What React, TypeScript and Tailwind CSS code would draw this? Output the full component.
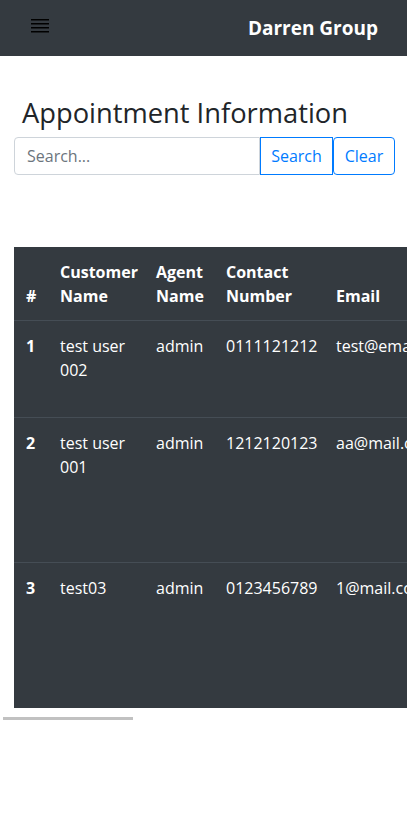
import React from "react";

const rows = [
  { id: 1, name: "test user 002", agent: "admin", phone: "0111121212", email: "test@email.com", h: "h-[97px] border-b" },
  { id: 2, name: "test user 001", agent: "admin", phone: "1212120123", email: "aa@mail.com", h: "h-[145px] border-b" },
  { id: 3, name: "test03", agent: "admin", phone: "0123456789", email: "1@mail.com", h: "h-[145px]" },
];

export default function App() {
  return (
    <div className="w-[407px] h-[816px] overflow-hidden bg-white font-['Open_Sans',sans-serif] text-[#212529]">
      {/* Navbar */}
      <div className="flex h-14 items-center justify-between bg-[#343a40] pl-[31px] pr-[29px]">
        <svg width="18" height="14" viewBox="0 0 18 14" className="mb-[4px]">
          <rect x="0" y="0" width="18" height="1.5" fill="#000" />
          <rect x="0" y="4" width="18" height="1.5" fill="#000" />
          <rect x="0" y="8" width="18" height="1.5" fill="#000" />
          <rect x="0" y="12" width="18" height="1.5" fill="#000" />
        </svg>
        <span className="text-[19px] font-bold text-white">Darren Group</span>
      </div>

      <div className="pl-[14px]">
        <h2 className="pl-2 pt-[40px] mb-[7px] text-[27.3px] leading-[34px] font-medium">
          Appointment Information
        </h2>

        {/* Search */}
        <div className="flex h-[38px] w-[381px]">
          <input
            type="text"
            placeholder="Search..."
            className="min-w-0 flex-1 rounded-l-[4px] border border-[#ced4da] px-3 text-base text-[#495057] placeholder:text-[#6c757d] outline-none"
          />
          <button className="w-[73px] border border-[#007bff] text-base text-[#007bff]">
            Search
          </button>
          <button className="w-[62px] rounded-[4px] border border-[#007bff] text-base text-[#007bff]">
            Clear
          </button>
        </div>

        {/* Table */}
        <div className="mt-[72px] overflow-hidden">
          <table className="w-[1000px] table-fixed border-separate border-spacing-0 bg-[#343a40] text-base leading-6 text-white">
            <colgroup>
              <col className="w-[34px]" />
              <col className="w-[96px]" />
              <col className="w-[70px]" />
              <col className="w-[110px]" />
              <col className="w-[170px]" />
              <col className="w-[130px]" />
              <col className="w-[110px]" />
              <col className="w-[280px]" />
            </colgroup>
            <thead>
              <tr>
                {["#", "Customer Name", "Agent Name", "Contact Number", "Email", "Date", "Time", "Remarks"].map(
                  (h) => (
                    <th
                      key={h}
                      className="h-[74px] border-b border-[#454d55] px-3 pb-3 text-left align-bottom font-bold"
                    >
                      {h}
                    </th>
                  )
                )}
              </tr>
            </thead>
            <tbody>
              {rows.map((r) => (
                <tr key={r.id}>
                  <td className={`${r.h} border-[#454d55] px-3 pt-[13px] align-top font-bold`}>{r.id}</td>
                  <td className={`${r.h} border-[#454d55] px-3 pt-[13px] align-top`}>{r.name}</td>
                  <td className={`${r.h} border-[#454d55] px-3 pt-[13px] align-top`}>{r.agent}</td>
                  <td className={`${r.h} border-[#454d55] px-3 pt-[13px] align-top`}>{r.phone}</td>
                  <td className={`${r.h} border-[#454d55] px-3 pt-[13px] align-top`}>{r.email}</td>
                  <td className={`${r.h} border-[#454d55] px-3 pt-[13px] align-top`}>2024-01-01</td>
                  <td className={`${r.h} border-[#454d55] px-3 pt-[13px] align-top`}>10:00</td>
                  <td className={`${r.h} border-[#454d55] px-3 pt-[13px] align-top`}>-</td>
                </tr>
              ))}
            </tbody>
          </table>
        </div>
      </div>

      {/* scrollbar thumb */}
      <div className="ml-[3px] mt-[9px] h-[3px] w-[130px] bg-[#c1c1c1]" />
    </div>
  );
}
